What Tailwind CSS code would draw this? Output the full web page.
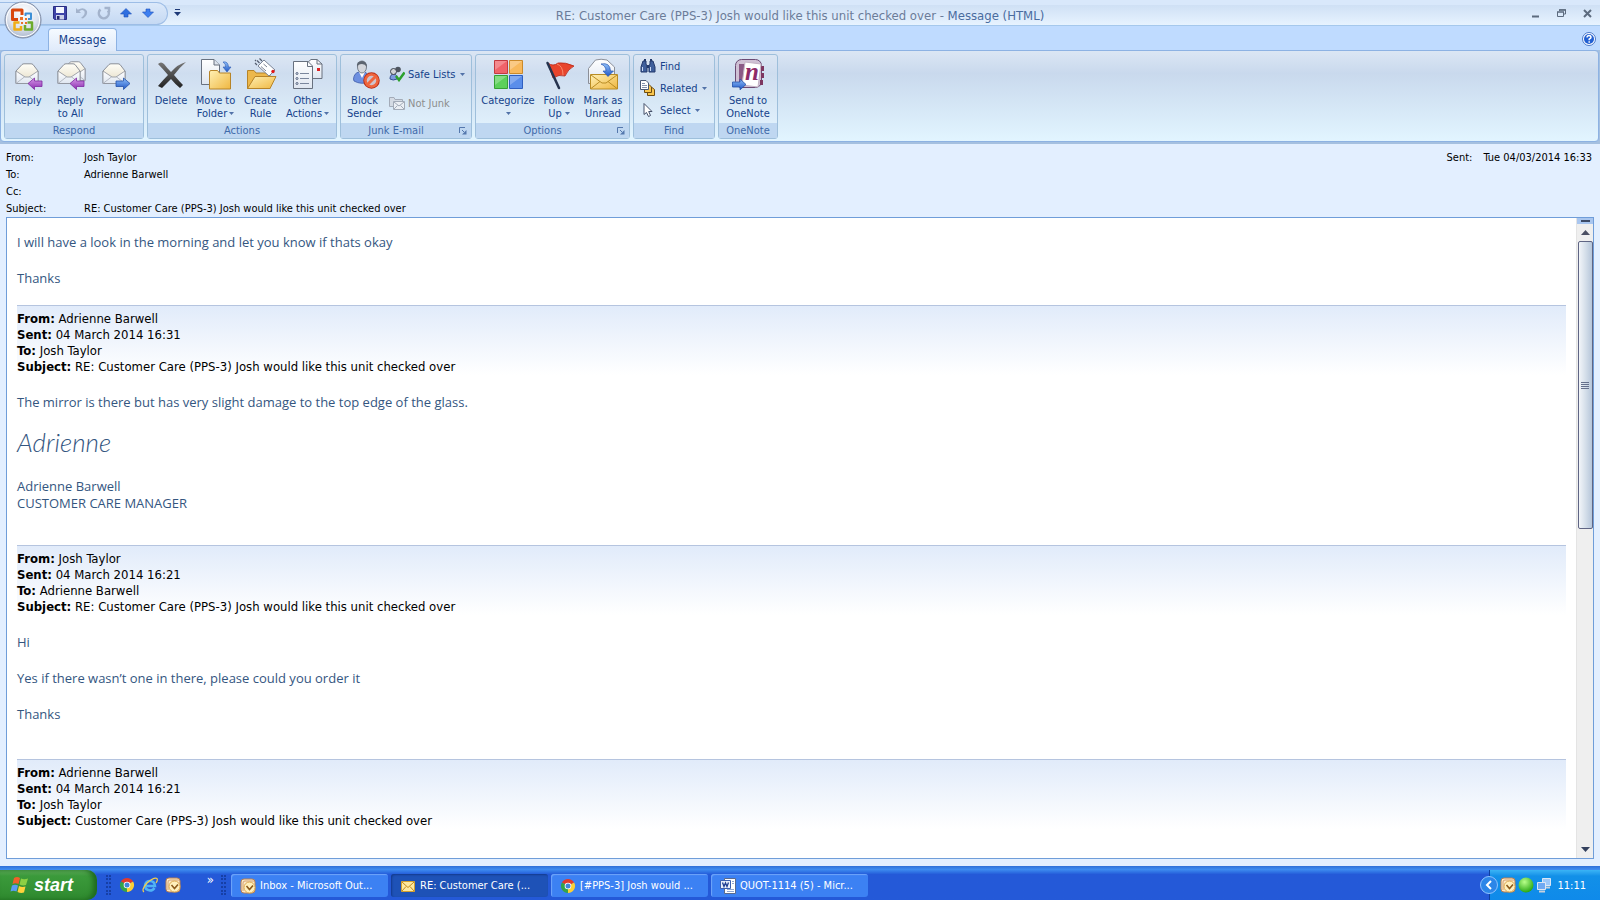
<!DOCTYPE html>
<html lang="en">
<head>
  <meta charset="UTF-8">
  <meta name="viewport" content="width=device-width, initial-scale=1">
  <title>RE: Customer Care (PPS-3) Josh would like this unit checked over - Message (HTML)</title>
  <script src="https://cdn.jsdelivr.net/npm/@tailwindcss/browser@4"></script>
</head>
<body class="h-screen flex flex-col overflow-hidden bg-[#e3efff] font-['DejaVu_Sans_Condensed','DejaVu_Sans',sans-serif] text-[11px] leading-[13px] text-black">

  <!-- Shared icon parts -->
  <svg class="absolute size-0" aria-hidden="true">
    <defs>
      <linearGradient id="paper" x1="0" y1="0" x2="0" y2="1"><stop offset="0" stop-color="#fff"/><stop offset="1" stop-color="#dfe6f0"/></linearGradient>
      <linearGradient id="cream" x1="0" y1="0" x2="0" y2="1"><stop offset="0" stop-color="#fffef8"/><stop offset="1" stop-color="#e4dcc4"/></linearGradient>
      <linearGradient id="gold" x1="0" y1="0" x2="1" y2="1"><stop offset="0" stop-color="#fff0b4"/><stop offset="1" stop-color="#efb741"/></linearGradient>
      <linearGradient id="purple" x1="0" y1="0" x2="0" y2="1"><stop offset="0" stop-color="#d79be8"/><stop offset="1" stop-color="#8a2bb0"/></linearGradient>
      <linearGradient id="blue" x1="0" y1="0" x2="0" y2="1"><stop offset="0" stop-color="#8fc0fb"/><stop offset="1" stop-color="#1f55c4"/></linearGradient>
      <linearGradient id="dark" x1="0" y1="0" x2="0" y2="1"><stop offset="0" stop-color="#777"/><stop offset="1" stop-color="#222"/></linearGradient>
      <radialGradient id="orb" cx=".5" cy=".3" r=".7"><stop offset="0" stop-color="#fff"/><stop offset=".6" stop-color="#dfe4ee"/><stop offset="1" stop-color="#a9b6cc"/></radialGradient>
      <radialGradient id="green" cx=".4" cy=".3" r=".7"><stop offset="0" stop-color="#b8ff8a"/><stop offset="1" stop-color="#2aa815"/></radialGradient>
      <symbol id="open-mail" viewBox="0 0 24 22">
        <path d="M1 8 7 1.500Q8 .8 9 .8H16Q17 .8 18 1.500L23 8V20.500H1Z" fill="url(#cream)" stroke="#8b8f98"/>
        <path d="M1 8 10 14H14L23 8V20.500H1Z" fill="url(#paper)" stroke="#8b8f98" stroke-width=".8"/>
        <path d="M1 20.500 10 13.500M23 20.500 14 13.500" stroke="#a6abb5" stroke-width=".8"/>
      </symbol>
      <symbol id="outlook" viewBox="0 0 16 16">
        <rect x="1" y="1" width="14" height="14" rx="3" fill="#fbe7c4" stroke="#b87e50"/>
        <path d="M3 13V5Q3 3 5 3H14" fill="none" stroke="#d4a273"/>
        <circle cx="9.500" cy="9.500" r="5.500" fill="#fff0bd" stroke="#dda950"/>
        <path d="M6.500 8 9.500 11.500 13 7.500" fill="none" stroke="#8c5a1c" stroke-width="1.600"/>
      </symbol>
      <symbol id="chrome" viewBox="0 0 16 16">
        <path d="M8 8 1.900 4.500A7 7 0 0 1 14.100 4.500Z" fill="#e13b2d"/>
        <path d="M8 8 14.100 4.500A7 7 0 0 1 8 15Z" fill="#fcd035"/>
        <path d="M8 8V15A7 7 0 0 1 1.900 4.500Z" fill="#35a34a"/>
        <circle cx="8" cy="8" r="3.300" fill="#fff"/><circle cx="8" cy="8" r="2.500" fill="#4285d8"/>
      </symbol>
      <symbol id="undo" viewBox="0 0 14 14">
        <path d="M1 2V7H6L4.300 5.300Q8 2.500 9.500 5.500 10.500 8.500 6 12L8 12.500Q13 9 12 5 9 0 2.800 3.700Z" fill="#a3b3cc"/>
      </symbol>
    </defs>
  </svg>

  <!-- Title bar -->
  <header class="relative flex h-[26px] shrink-0 items-center border-b border-[#a5c8ec] bg-linear-to-b from-[#cfe0f5] to-[#e7f3ff] border-t-[5px] border-t-[#d9e8fb]">
    <button aria-label="Office Button" class="absolute left-1 -top-1 z-10 size-[38px]">
      <svg viewBox="0 0 38 38" class="size-[38px]">
        <circle cx="19" cy="19" r="18" fill="url(#orb)" stroke="#7d8ba5"/>
        <circle cx="19" cy="19" r="16.500" fill="none" stroke="#fff"/>
        <g fill="none" stroke-linejoin="round">
          <path d="M14 18.500H8.500V9H18V14" stroke="#d9480f" stroke-width="3"/>
          <path d="M21.500 15V12.500H27V18H24" stroke="#3d8fd6" stroke-width="2"/>
          <path d="M15.500 21.500H10.500V28.500H17V25" stroke="#f0ad14" stroke-width="2.500"/>
          <path d="M21 24V28.500H28V21.500H23.500" stroke="#6cab2c" stroke-width="2.500"/>
        </g>
        <path d="M16 16h3v3h-3zM21 17h2v2h-2zM17 21h2v2h-2zM21 21h2v2h-2z" fill="#e9722a"/>
      </svg>
    </button>
    <div class="flex h-[23px] w-[168px] -mt-1 shrink-0 items-center gap-2 rounded-r-full border border-l-0 border-[#9dbde6] bg-linear-to-b from-[#dce9fa] to-[#c5d9f3] pl-[53px]">
      <button aria-label="Save"><svg viewBox="0 0 14 14" class="size-[14px]"><path d="M.5.5H13.500V13.500H1.500L.5 12.500Z" fill="#3d43a8" stroke="#292d83"/><path d="M3 1h8v6H3z" fill="#f4f7ff"/><path d="M3 9h8v4.500H3z" fill="#c9cfe8"/><path d="M4 10h2.500v3.500H4z" fill="#23276e"/></svg></button>
      <button aria-label="Undo" disabled><svg class="size-[14px]"><use href="#undo"/></svg></button>
      <button aria-label="Redo" disabled><svg viewBox="0 0 14 14" class="size-[14px]"><path d="M3.500 3.500A5 5 0 1 0 11 4.500M7.500 2H12V6" fill="none" stroke="#a3b3cc" stroke-width="2.500"/></svg></button>
      <button aria-label="Previous Item"><svg viewBox="0 0 14 14" class="size-[14px]"><path d="M7 2.500 12.500 8H9V11H5V8H1.500Z" fill="#2f6fe0" stroke="#1b4fb8" stroke-width=".6"/></svg></button>
      <button aria-label="Next Item"><svg viewBox="0 0 14 14" class="size-[14px]"><path d="M7 11.500 12.500 6H9V3H5V6H1.500Z" fill="#3d7ff0" stroke="#1b4fb8" stroke-width=".6"/></svg></button>
    </div>
    <button aria-label="Customize Quick Access Toolbar" class="mb-1 ml-1.5"><svg viewBox="0 0 7 8" class="h-2 w-[7px]"><path d="M1 .5H6" stroke="#1e3a78"/><path d="M0 3H7L3.500 7Z" fill="#1e3a78"/></svg></button>
    <h1 class="flex-1 pr-[112px] text-center text-[13px] text-[#6b7c99]">RE: Customer Care (PPS-3) Josh would like this unit checked over - <span class="text-[#4a6c9f]">Message (HTML)</span></h1>
    <div class="flex items-center gap-[17px] pb-1 pr-2">
      <button aria-label="Minimize"><svg viewBox="0 0 9 9" class="size-[9px]"><path d="M1 7.500H8" stroke="#5c6b7e" stroke-width="2"/></svg></button>
      <button aria-label="Restore"><svg viewBox="0 0 9 9" class="size-[9px]"><path d="M2.500 2V.8H8.500V5H7M.5 3V7.500H6.500V3" fill="none" stroke="#5c6b7e"/><path d="M0 3H7M2 1H9" stroke="#5c6b7e" stroke-width="1.500"/></svg></button>
      <button aria-label="Close"><svg viewBox="0 0 9 9" class="size-[9px]"><path d="M1 1 8 8M8 1 1 8" stroke="#5c6b7e" stroke-width="2"/></svg></button>
    </div>
  </header>

  <!-- Ribbon tabs -->
  <nav class="flex h-[24px] shrink-0 items-end justify-between bg-[#bfdbff] pl-12 pr-1">
    <button class="z-[1] -mb-px h-[23px] w-[69px] rounded-t border border-b-0 border-[#8db2e3] bg-linear-to-b from-[#f5faff] to-[#dfeafa] text-[12px] text-[#15428b]">Message</button>
    <button aria-label="Help" class="mb-1"><svg viewBox="0 0 14 14" class="size-[14px]"><circle cx="7" cy="7" r="6.500" fill="#fff" stroke="#4b78c8"/><circle cx="7" cy="7" r="5" fill="#2260d2"/><path d="M5 5.500Q5.200 3.500 7 3.500 9 3.600 9 5.200 9 6.200 7.200 7.200V8.300M7.200 9.300V10.700" fill="none" stroke="#fff" stroke-width="1.500"/></svg></button>
  </nav>

  <!-- Ribbon -->
  <div class="bg-[#a5c0e0] pb-[2px] shrink-0">
    <div class="flex h-[92px] gap-[3px] rounded-[4px] border border-[#8db2e3] bg-linear-to-b from-[#dbe6f4] from-0% via-[#c9d9ed] via-25% to-[#e2f5ff] pl-[3px] pt-[3px] pb-[2px] mr-px text-[#15428b]">

      <section class="flex w-[140px] flex-col rounded-[3px] border border-[#9ebfdb] bg-white/10">
        <div class="flex flex-1 pt-[3px] pl-[2px]">
          <button class="flex w-[42px] flex-col items-center"><svg viewBox="0 0 32 32" class="size-8 mb-1"><use href="#open-mail" x="3" y="5" width="24" height="22"/><path d="M16 25.500 22.500 20V23H30V28.500H22.500V31.500Z" fill="url(#purple)" stroke="#7d2aa0" stroke-width=".8"/></svg>Reply</button>
          <button class="flex w-[43px] flex-col items-center"><svg viewBox="0 0 32 32" class="size-8 mb-1"><use href="#open-mail" x="8" y="3" width="23" height="21"/><use href="#open-mail" x="2" y="5" width="24" height="22"/><path d="M15 25.500 21.500 20V23H29V28.500H21.500V31.500Z" fill="url(#purple)" stroke="#7d2aa0" stroke-width=".8"/></svg>Reply<br>to All</button>
          <button class="flex w-[48px] flex-col items-center"><svg viewBox="0 0 32 32" class="size-8 mb-1"><use href="#open-mail" x="2" y="5" width="24" height="22"/><path d="M30 25.500 23.500 20V23H16V28.500H23.500V31.500Z" fill="url(#blue)" stroke="#2350a8" stroke-width=".8"/></svg>Forward</button>
        </div>
        <h2 class="h-[15px] bg-[#bfd7f1] text-center leading-[15px] text-[#3e6aaa]">Respond</h2>
      </section>

      <section class="flex w-[190px] flex-col rounded-[3px] border border-[#9ebfdb] bg-white/10">
        <div class="flex flex-1 pt-[3px] pl-px">
          <button class="flex w-[44px] flex-col items-center"><svg viewBox="0 0 32 32" class="size-8 mb-1"><path d="M3 6Q6 3 9 6 12 10 16 14 23 6 31 4 25 9 19 17 24 23 28 27L25 30Q20 26 16 21 11 26 7 30L3 28Q8 22 13 17 8 11 3 6Z" fill="url(#dark)"/></svg>Delete</button>
          <button class="flex w-[45px] flex-col items-center"><svg viewBox="0 0 32 32" class="size-8 mb-1"><path d="M1.500 1.500H14L19.500 7V26.500H1.500Z" fill="url(#paper)" stroke="#68717f"/><path d="M14 1.500V7H19.500" fill="#dde3ec" stroke="#68717f"/><path d="M9.500 31V14Q9.500 12.500 11 12.500H17.500L19.500 15H30.500V31Z" fill="url(#gold)" stroke="#b78428"/><path d="M23 4Q28 3 28.500 9H31L27 14 23 9H25.500Q26 6 23 4Z" fill="url(#blue)" stroke="#2a58b0" stroke-width=".6"/></svg>Move to<span class="flex items-center gap-[2px]">Folder<svg viewBox="0 0 5 3" class="h-[3px] w-[5px]"><path d="M0 0H5L2.500 3Z" fill="#5272a8"/></svg></span></button>
          <button class="flex w-[45px] flex-col items-center"><svg viewBox="0 0 32 32" class="size-8 mb-1"><path d="M2.500 30.500V12.500H9L11 15H25V30.500Z" fill="#edb84c" stroke="#b78428"/><path d="M19 2 30 12 24 18 13 8Z" fill="#fff" stroke="#7b8496"/><path d="M16 8.500 21 13M18.500 6 22 9" stroke="#7d8494"/><circle cx="28" cy="13.500" r="1.700" fill="#e01818"/><path d="M10 5 12 7M12 2.500 14.500 5M14.500 .5 17 3M10 2 11 3" stroke="#555e70" stroke-width="1.200"/><path d="M2.500 30.500 10 18.500H31L25 30.500Z" fill="url(#gold)" stroke="#b78428"/></svg>Create<br>Rule</button>
          <button class="flex w-[49px] flex-col items-center"><svg viewBox="0 0 32 32" class="size-8 mb-1"><path d="M15 20.500V5L19 1.500H25L30 6V20.500Z" fill="url(#paper)" stroke="#68717f"/><path d="M25 1.500V6H30" fill="none" stroke="#68717f"/><path d="M25 10h3v3h-3z" fill="#d22"/><path d="M1.500 3.500H16L20.500 8V30.500H1.500Z" fill="url(#paper)" stroke="#68717f"/><path d="M15.500 3.500V8.500H20.500" fill="none" stroke="#68717f"/><path d="M8 15.500H17M8 20.500H17M8 25.500H17" stroke="#7a869c"/><g fill="#fff" stroke="#4f5f7d"><circle cx="5" cy="15.500" r="1"/><circle cx="5" cy="20.500" r="1"/><circle cx="5" cy="25.500" r="1"/></g></svg>Other<span class="flex items-center gap-[2px]">Actions<svg viewBox="0 0 5 3" class="h-[3px] w-[5px]"><path d="M0 0H5L2.500 3Z" fill="#5272a8"/></svg></span></button>
        </div>
        <h2 class="h-[15px] bg-[#bfd7f1] text-center leading-[15px] text-[#3e6aaa]">Actions</h2>
      </section>

      <section class="flex w-[132px] flex-col rounded-[3px] border border-[#9ebfdb] bg-white/10">
        <div class="flex flex-1 pt-[3px] pl-px">
          <button class="flex w-[45px] flex-col items-center"><svg viewBox="0 0 32 32" class="size-8 mb-1"><path d="M4.500 21Q5 15 10 14H16Q20 16 20 24 12 27 5 23Z" fill="#6d8fe0" stroke="#3d5aa8" stroke-width=".8"/><path d="M10 14 13 20 16 14Z" fill="#fff"/><ellipse cx="13" cy="9" rx="4.500" ry="6" fill="#d3d6dc" stroke="#5d6571" stroke-width=".8"/><path d="M8 9Q7 3 13 3 18 3 18 9 16 6 13 6 9 6 8 9Z" fill="#5c6470"/><circle cx="22.500" cy="22.500" r="7.500" fill="none" stroke="#b92d16" stroke-width="1.500"/><circle cx="22.500" cy="22.500" r="6" fill="#cfc3cc" stroke="#f0653c" stroke-width="2.500"/><path d="M18.500 26.500 26.500 18.500" stroke="#f0653c" stroke-width="3"/></svg>Block<br>Sender</button>
          <div class="flex flex-1 flex-col gap-[13px] pl-[2px] pt-[8px]">
            <button class="flex h-4 items-center gap-[3px] whitespace-nowrap"><svg viewBox="0 0 16 16" class="size-4"><path d="M1 13Q1 8 5 8 8 8 8 13 4 15 1 13Z" fill="#7d9ae0" stroke="#344f8d"/><circle cx="9" cy="3.500" r="2.800" fill="#4e5560"/><circle cx="4.500" cy="5.500" r="3" fill="#d2d4d8" stroke="#3c424b"/><path d="M7 10 10 14 15.500 6.500" fill="none" stroke="#2ca02c" stroke-width="2.500"/></svg>Safe Lists<svg viewBox="0 0 5 3" class="ml-[1px] h-[3px] w-[5px]"><path d="M0 0H5L2.500 3Z" fill="#5272a8"/></svg></button>
            <button disabled class="flex h-4 items-center gap-[3px] whitespace-nowrap text-[#8d8d8d]"><svg viewBox="0 0 16 16" class="size-4"><path d="M.5 11.500V2.500H5L6 4.500H13.500V11.500Z" fill="#d5dbe4" stroke="#a3abb8"/><path d="M4.500 6.500H15.500V14.500H4.500Z" fill="#eceff4" stroke="#a3abb8"/><path d="M5 7 10 11 15 7M5 14 8.500 10.500M15 14 11.500 10.500" fill="none" stroke="#a3abb8"/></svg>Not Junk</button>
          </div>
        </div>
        <div class="flex h-[15px] items-center bg-[#bfd7f1] pr-1">
          <h2 class="flex-1 pr-2 text-center text-[#3e6aaa]">Junk E-mail</h2>
          <button aria-label="Junk E-mail options"><svg viewBox="0 0 8 8" class="size-2"><path d="M.5 6V.5H6M3 3 5 5" fill="none" stroke="#5578ad"/><path d="M7.500 3V7.500H3Z" fill="#5578ad"/></svg></button>
        </div>
      </section>

      <section class="flex w-[155px] flex-col rounded-[3px] border border-[#9ebfdb] bg-white/10">
        <div class="flex flex-1 pt-[3px] pl-px">
          <button class="flex w-[62px] flex-col items-center"><svg viewBox="0 0 32 32" class="size-8 mb-1"><path d="M2.500 2.500H15.500V15.500H2.500Z" fill="#f0636a" stroke="#c23a40"/><path d="M17.500 2.500H30.500V15.500H17.500Z" fill="#f8b95c" stroke="#cb8a2a"/><path d="M2.500 17.500H15.500V30.500H2.500Z" fill="#5cd05a" stroke="#36a034"/><path d="M17.500 17.500H30.500V30.500H17.500Z" fill="#5a8eea" stroke="#2f5fc0"/><path d="M3 3H15L3 12ZM18 3H30L18 12ZM3 18H15L3 27ZM18 18H30L18 27Z" fill="#fff" fill-opacity=".25"/></svg>Categorize<svg viewBox="0 0 5 3" class="mt-[5px] h-[3px] w-[5px]"><path d="M0 0H5L2.500 3Z" fill="#5272a8"/></svg></button>
          <button class="flex w-[40px] flex-col items-center"><svg viewBox="0 0 32 32" class="size-8 mb-1"><path d="M5 5Q10 9 15 5 22 4 31 8 25 11 22 18 16 16 10 20Z" fill="#e8452c" stroke="#b82716" stroke-width=".8"/><path d="M14 6Q20 8 20 17" fill="none" stroke="#f88b6c"/><path d="M4.500 5 16 30" stroke="#26344f" stroke-width="2.500" stroke-linecap="round"/></svg>Follow<span class="flex items-center gap-[2px]">Up<svg viewBox="0 0 5 3" class="ml-[1px] h-[3px] w-[5px]"><path d="M0 0H5L2.500 3Z" fill="#5272a8"/></svg></span></button>
          <button class="flex w-[48px] flex-col items-center"><svg viewBox="0 0 32 32" class="size-8 mb-1"><path d="M1.500 25.500V10.500L8.500 2Q14 .5 20 2L27.500 9V25.500Z" fill="url(#paper)" stroke="#8b8f98"/><path d="M3.500 16.500H30.500V31H3.500Z" fill="url(#gold)" stroke="#b98c24"/><path d="M4 17 15 25H19L30 17M4 30.500 13 23.500M30 30.500 21 23.500" fill="none" stroke="#b98c24"/><path d="M14 6Q23 4 23.500 13H26.500L21 18.500 16 13H19Q19 8 14 6Z" fill="url(#blue)" stroke="#2a58b0" stroke-width=".7"/></svg>Mark as<br>Unread</button>
        </div>
        <div class="flex h-[15px] items-center bg-[#bfd7f1] pr-1">
          <h2 class="flex-1 pr-2 text-center text-[#3e6aaa]">Options</h2>
          <button aria-label="Message options"><svg viewBox="0 0 8 8" class="size-2"><path d="M.5 6V.5H6M3 3 5 5" fill="none" stroke="#5578ad"/><path d="M7.500 3V7.500H3Z" fill="#5578ad"/></svg></button>
        </div>
      </section>

      <section class="flex w-[82px] flex-col rounded-[3px] border border-[#9ebfdb] bg-white/10">
        <div class="flex flex-1 flex-col gap-[6px] pl-[6px] pt-[3px]">
          <button class="flex h-4 items-center gap-[4px]"><svg viewBox="0 0 16 16" class="size-4"><path d="M3 3H6V6L7 8V14H1V9ZM10 3H13L15 9V14H9V8L10 6Z" fill="#3f5f9c" stroke="#23396b"/><path d="M7 7H9V10H7Z" fill="#23396b"/><path d="M2.500 9V13M10.500 9V13" stroke="#c8d8f4"/><path d="M4 1h2v2H4zM10 1h2v2h-2z" fill="#23396b"/></svg>Find</button>
          <button class="flex h-4 items-center gap-[4px]"><svg viewBox="0 0 16 16" class="size-4"><path d="M7.500 7.500H12L14.500 9.500V15.500H7.500Z" fill="#f9c54d" stroke="#6e4c10"/><path d="M4.500 4.500H9L11.500 7V12.500H4.500Z" fill="#f9c54d" stroke="#6e4c10"/><path d="M.5.500H6L8.500 3V9.500H.5Z" fill="#fff" stroke="#4a5975"/><path d="M2 3.500H5M2 5.500H7M2 7.500H7" stroke="#8593ad"/></svg>Related<svg viewBox="0 0 5 3" class="h-[3px] w-[5px]"><path d="M0 0H5L2.500 3Z" fill="#5272a8"/></svg></button>
          <button class="flex h-4 items-center gap-[4px]"><svg viewBox="0 0 16 16" class="size-4"><path d="M4 1.500V12.500L6.500 10.500 8.500 14.500 10.500 13.500 8.700 9.500H12Z" fill="#fff" stroke="#44506a"/></svg>Select<svg viewBox="0 0 5 3" class="h-[3px] w-[5px]"><path d="M0 0H5L2.500 3Z" fill="#5272a8"/></svg></button>
        </div>
        <h2 class="h-[15px] bg-[#bfd7f1] text-center leading-[15px] text-[#3e6aaa]">Find</h2>
      </section>

      <section class="flex w-[60px] flex-col rounded-[3px] border border-[#9ebfdb] bg-white/10">
        <div class="flex flex-1 justify-center pt-[3px]">
          <button class="flex flex-col items-center whitespace-nowrap"><svg viewBox="0 0 32 32" class="size-8 mb-1"><rect x="3.500" y="1.500" width="26" height="28" rx="6" fill="#cfc0d4" stroke="#6b4a73"/><path d="M7 6H13L10 25H7Z" fill="#8b5a86"/><path d="M29 8h3v5h-3zM29 15h3v5h-3zM28 22h3v5h-3z" fill="#7d3660"/><path d="M13 4 29 6 26 29 10 27Z" fill="#fff" stroke="#c3b2c4"/><text x="13" y="22" class="font-['Liberation_Serif',serif]" font-size="25" font-weight="bold" font-style="italic" fill="#8e2a68">n</text><path d="M14 26.500 8 21V24H.5V29H8V31.800Z" fill="url(#blue)" stroke="#2350a8" stroke-width=".8"/></svg>Send to<br>OneNote</button>
        </div>
        <h2 class="h-[15px] bg-[#bfd7f1] text-center leading-[15px] text-[#3e6aaa]">OneNote</h2>
      </section>
    </div>
  </div>

  <!-- Message header -->
  <div class="flex shrink-0 justify-between pl-[6px] pr-2 pt-[5px] leading-[17px]">
    <dl class="grid grid-cols-[78px_auto]">
      <dt>From:</dt><dd>Josh Taylor</dd>
      <dt>To:</dt><dd>Adrienne Barwell</dd>
      <dt>Cc:</dt><dd></dd>
      <dt>Subject:</dt><dd>RE: Customer Care (PPS-3) Josh would like this unit checked over</dd>
    </dl>
    <p><span class="mr-[11px]">Sent:</span>Tue 04/03/2014 16:33</p>
  </div>

  <!-- Message body -->
  <main class="mx-[6px] mb-[7px] flex min-h-0 flex-1 border border-[#6f9dd9] bg-white">
    <article class="min-w-0 flex-1 overflow-hidden pl-[10px] pr-[10px] pt-[15px] font-['Open_Sans',sans-serif] text-[13px] leading-[18px] text-[#34567f]">
      <p>I will have a look in the morning and let you know if thats okay</p>
      <p class="mt-[18px]">Thanks</p>

      <div class="mt-[18px] h-[70px] border-t border-[#b5c4df] bg-linear-to-b from-[#e1ebfa] to-white pt-[5px] font-['DejaVu_Sans_Condensed','DejaVu_Sans',sans-serif] leading-[16px] text-black">
        <p><b>From:</b> Adrienne Barwell</p>
        <p><b>Sent:</b> 04 March 2014 16:31</p>
        <p><b>To:</b> Josh Taylor</p>
        <p><b>Subject:</b> RE: Customer Care (PPS-3) Josh would like this unit checked over</p>
      </div>
      <p class="mt-[18px]">The mirror is there but has very slight damage to the top edge of the glass.</p>
      <p class="mt-[17px] font-[Lato,cursive] text-[26px] font-light italic leading-[28px]">Adrienne</p>
      <p class="mt-[22px] leading-[17px]">Adrienne Barwell<br>CUSTOMER CARE MANAGER</p>

      <div class="mt-[33px] h-[70px] border-t border-[#b5c4df] bg-linear-to-b from-[#e1ebfa] to-white pt-[5px] font-['DejaVu_Sans_Condensed','DejaVu_Sans',sans-serif] leading-[16px] text-black">
        <p><b>From:</b> Josh Taylor</p>
        <p><b>Sent:</b> 04 March 2014 16:21</p>
        <p><b>To:</b> Adrienne Barwell</p>
        <p><b>Subject:</b> RE: Customer Care (PPS-3) Josh would like this unit checked over</p>
      </div>
      <p class="mt-[18px]">Hi</p>
      <p class="mt-[18px]">Yes if there wasn’t one in there, please could you order it</p>
      <p class="mt-[18px]">Thanks</p>

      <div class="mt-[36px] h-[70px] border-t border-[#b5c4df] bg-linear-to-b from-[#e1ebfa] to-white pt-[5px] font-['DejaVu_Sans_Condensed','DejaVu_Sans',sans-serif] leading-[16px] text-black">
        <p><b>From:</b> Adrienne Barwell</p>
        <p><b>Sent:</b> 04 March 2014 16:21</p>
        <p><b>To:</b> Josh Taylor</p>
        <p><b>Subject:</b> Customer Care (PPS-3) Josh would like this unit checked over</p>
      </div>
    </article>

    <!-- Scrollbar -->
    <div class="flex w-[17px] shrink-0 flex-col items-center border-l border-[#e4e4e4] bg-[#efefef]">
      <button aria-label="Split" class="flex h-[6px] w-full items-center justify-center bg-[#a9c6ef]"><span class="h-[2px] w-[9px] bg-[#3c4a66]"></span></button>
      <button aria-label="Scroll up" class="flex h-[17px] items-center"><svg viewBox="0 0 9 5" class="h-[5px] w-[9px]"><path d="M0 5H9L4.500 0Z" fill="#4b4f63"/></svg></button>
      <div class="flex h-[45%] w-[15px] flex-col items-center justify-center gap-px rounded-[2px] border border-[#5f6584] bg-linear-to-r from-[#f2f5f9] via-[#d5dfea] to-[#b6c6da]">
        <span class="h-px w-2 bg-[#65708c]"></span>
        <span class="h-px w-2 bg-[#65708c]"></span>
        <span class="h-px w-2 bg-[#65708c]"></span>
        <span class="h-px w-2 bg-[#65708c]"></span>
      </div>
      <button aria-label="Scroll down" class="mt-auto flex h-[17px] items-center"><svg viewBox="0 0 9 5" class="h-[5px] w-[9px]"><path d="M0 0H9L4.500 5Z" fill="#34415e"/></svg></button>
    </div>
  </main>

  <!-- Taskbar -->
  <footer class="flex h-[34px] shrink-0 bg-linear-to-b from-[#2f6fd8] from-0% via-[#3f8cf0] via-10% to-[#2459d8] to-25% text-white">
    <button class="mt-[4px] flex w-[97px] items-center gap-[4px] rounded-r-[10px] bg-linear-to-b from-[#5fae5c] from-0% via-[#3b9a3b] via-20% to-[#2f8a2f] pl-[10px] shadow-[inset_-4px_0_5px_#1f6a1f] font-['Liberation_Sans',sans-serif] text-[18px] font-bold italic">
      <svg viewBox="0 0 20 18" class="h-[18px] w-5"><path d="M4 2Q7 0 10 2L8.500 8Q5.500 6.500 2.500 8Z" fill="#f0602a"/><path d="M11 2.500Q14 4 18 2.500L16 9Q13 10 9.500 8.500Z" fill="#8cd044"/><path d="M2 9.500Q5 8 8 9.500L6.500 15.500Q3.500 14 .5 15.500Z" fill="#5a9cf4"/><path d="M9 10Q12 11.500 15.500 10.500L14 16.500Q11 17.500 7.500 16Z" fill="#ffd23c"/></svg>
      start
    </button>
    <div class="flex w-[134px] items-center gap-[7px] pl-[9px] pt-[3px]">
      <span class="mr-px h-5 w-[5px] border-x-2 border-dotted border-[#163fa6]"></span>
      <button aria-label="Google Chrome"><svg class="size-4"><use href="#chrome"/></svg></button>
      <button aria-label="Internet Explorer"><svg viewBox="0 0 16 16" class="size-4"><path d="M12.500 11Q11 13.500 8 13.500 3 13 3 8.500 3.500 4 8 4 12.500 4 13 9H4" fill="none" stroke="#4fb3f5" stroke-width="2.500"/><path d="M2 15Q-1 13 5 6 12 0 15 1.500 16 3 14 6" fill="none" stroke="#f4cf4a" stroke-width="1.200"/></svg></button>
      <button aria-label="Outlook"><svg class="size-4"><use href="#outlook"/></svg></button>
      <button aria-label="More" class="ml-auto pb-[10px] text-[13px] leading-[13px]">»</button>
      <span class="mr-[5px] h-5 w-[5px] border-x-2 border-dotted border-[#163fa6]"></span>
    </div>
    <div class="flex min-w-0 flex-1 gap-[3px] pt-[8px] pb-[3px]">
      <button class="flex w-[157px] items-center gap-[4px] rounded-[3px] bg-[#3c81f3] pl-[9px] shadow-[inset_1px_1px_1px_#6fa5fa]"><svg class="size-4"><use href="#outlook"/></svg>Inbox - Microsoft Out...</button>
      <button class="flex w-[157px] items-center gap-[4px] rounded-[3px] bg-[#1e52b7] pl-[9px] shadow-[inset_1px_1px_2px_#133a8c]"><svg viewBox="0 0 16 16" class="size-4"><path d="M1.500 3.500H14.500V13.500H1.500Z" fill="#ffe9a0" stroke="#d3a02f"/><path d="M2 4 8 9.500 14 4M2 13 6 8.500M14 13 10 8.500" fill="none" stroke="#c28a1c"/></svg>RE: Customer Care (...</button>
      <button class="flex w-[157px] items-center gap-[4px] rounded-[3px] bg-[#3c81f3] pl-[9px] shadow-[inset_1px_1px_1px_#6fa5fa]"><svg class="size-4"><use href="#chrome"/></svg>[#PPS-3] Josh would ...</button>
      <button class="flex w-[157px] items-center gap-[4px] rounded-[3px] bg-[#3c81f3] pl-[9px] shadow-[inset_1px_1px_1px_#6fa5fa]"><svg viewBox="0 0 16 16" class="size-4"><path d="M4.500.5H15.500V15.500H4.500Z" fill="#fff" stroke="#5a6a8c"/><path d="M7 11.500H14M7 13.500H14M12 3.500H14M12 5.500H14" stroke="#8fa5d0"/><path d="M.5 2.500H10.500V10.500H.5Z" fill="#e8effc" stroke="#3b5fae"/><path d="M2.500 4.500 4 8.500 5.500 5 7 8.500 8.500 4.500" fill="none" stroke="#1f3f92" stroke-width="1.300"/></svg>QUOT-1114 (5) - Micr...</button>
    </div>
    <div class="relative mt-[4px] flex w-[111px] items-center gap-[2px] border-l border-[#0f3f9e] bg-linear-to-b from-[#3ab4f5] from-0% via-[#1290e8] via-20% to-[#0f8aea] pl-[10px]">
      <button aria-label="Show hidden icons" class="absolute -left-[10px] top-[6px]"><svg viewBox="0 0 18 18" class="size-[18px]"><circle cx="9" cy="9" r="8.500" fill="#2c86e8" stroke="#8fc4ff"/><path d="M11 5 7 9 11 13" fill="none" stroke="#fff" stroke-width="2"/></svg></button>
      <svg class="size-4"><use href="#outlook"/></svg>
      <svg viewBox="0 0 16 16" class="size-4"><circle cx="8" cy="8" r="7.500" fill="url(#green)"/></svg>
      <svg viewBox="0 0 16 16" class="size-4"><path d="M6.500 1.500H14.500V8.500H6.500Z" fill="#9cc8fa" stroke="#dce6f4"/><path d="M9 10.500H14" stroke="#c8d0dc" stroke-width="2"/><path d="M1.500 5.500H9.500V12.500H1.500Z" fill="#6fa9f2" stroke="#dce6f4"/><path d="M3 14.500H9" stroke="#c8d0dc" stroke-width="2"/></svg>
      <time class="ml-auto mr-[14px]">11:11</time>
    </div>
  </footer>

</body>
</html>
